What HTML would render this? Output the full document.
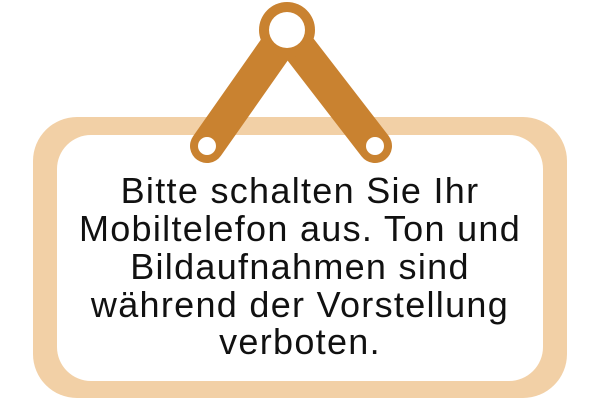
<!DOCTYPE html>
<html><head><meta charset="utf-8"><style>
html,body{margin:0;padding:0;background:#fff;width:600px;height:400px;overflow:hidden;position:relative}
.outer{position:absolute;left:33px;top:117px;width:534px;height:281px;background:#f2d0a6;border-radius:44px}
.inner{position:absolute;left:57px;top:135px;width:486px;height:246px;background:#fff;border-radius:34px}
.t{position:absolute;left:0;width:600px;text-align:center;font-family:"Liberation Sans",sans-serif;font-size:36px;letter-spacing:1.3px;color:#111;line-height:38px;white-space:pre}
svg{position:absolute;left:0;top:0}
</style></head><body>
<div class="outer"></div><div class="inner"></div>
<svg width="600" height="400">
<g stroke="#c98230" stroke-width="34" stroke-linecap="round">
<line x1="287" y1="32" x2="207" y2="146"/>
<line x1="287" y1="32" x2="375" y2="146"/>
</g>
<circle cx="287" cy="30" r="28" fill="#c98230"/>
<circle cx="287" cy="30" r="18" fill="#fff"/>
<circle cx="207" cy="146" r="9" fill="#fff"/>
<circle cx="375" cy="146" r="9" fill="#fff"/>
</svg>
<div class="t" style="top:172px">Bitte schalten Sie Ihr</div>
<div class="t" style="top:210px">Mobiltelefon aus. Ton und</div>
<div class="t" style="top:248px">Bildaufnahmen sind</div>
<div class="t" style="top:286px">während der Vorstellung</div>
<div class="t" style="top:323px">verboten.</div>
</body></html>
